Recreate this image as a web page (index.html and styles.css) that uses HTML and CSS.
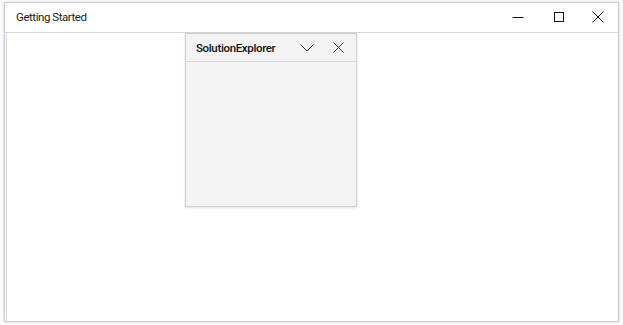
FILE: index.html
```html
<!DOCTYPE html>
<html>
<head>
<meta charset="utf-8">
<link rel="stylesheet" href="styles.css">
</head>
<body>
<div class="window">
  <div class="titlebar">
    <span class="title">Getting Started</span>
    <div class="controls">
      <span class="ctl ctl-min"><svg width="12" height="12" viewBox="0 0 12 12"><path d="M0.5 6.5H11.5" stroke="#111" stroke-width="1"/></svg></span>
      <span class="ctl ctl-max"><svg width="12" height="12" viewBox="0 0 12 12"><rect x="1.5" y="1.5" width="9" height="9" fill="none" stroke="#111" stroke-width="1"/></svg></span>
      <span class="ctl"><svg width="12" height="12" viewBox="0 0 12 12"><path d="M0.5 0.5L11.5 11.5M11.5 0.5L0.5 11.5" stroke="#111" stroke-width="1"/></svg></span>
    </div>
  </div>
  <div class="content">
    <div class="panel">
      <div class="panel-head">
        <span class="panel-title">SolutionExplorer</span>
        <span class="pbtn chev"><svg width="14" height="8" viewBox="0 0 14 8"><path d="M0.5 0.5L7 7L13.5 0.5" fill="none" stroke="#333" stroke-width="1"/></svg></span>
        <span class="pbtn"><svg width="11" height="11" viewBox="0 0 11 11"><path d="M0.5 0.5L10.5 10.5M10.5 0.5L0.5 10.5" fill="none" stroke="#333" stroke-width="1"/></svg></span>
      </div>
      <div class="panel-body"></div>
    </div>
  </div>
</div>
</body>
</html>
```
FILE: styles.css
```css
html, body {
  margin: 0;
  padding: 0;
  background: #ffffff;
}
body {
  width: 623px;
  height: 325px;
  padding: 2px 4px 3px 4px;
  box-sizing: border-box;
  font-family: "Roboto", "Noto Sans", sans-serif;
}
.window {
  height: 100%;
  box-sizing: border-box;
  border: 1px solid #c9ccd8;
  box-shadow: 0 0 3px rgba(150,160,190,0.5);
  display: flex;
  flex-direction: column;
  background: #fff;
}
.titlebar {
  height: 29px;
  display: flex;
  align-items: center;
  justify-content: space-between;
  border-bottom: 1px solid #d6d6d6;
  flex: none;
}
.title {
  font-size: 11.5px;
  color: #1a1a1a;
  margin-left: 11px;
  margin-top: -2px;
  letter-spacing: -0.45px;
}
.controls {
  display: flex;
  margin-right: 14px;
  margin-top: -1px;
}
.ctl {
  width: 12px;
  height: 12px;
  display: block;
}
.ctl-min { margin-right: 29px; }
.ctl-max { margin-right: 27px; }
.ctl svg { display: block; }
.content {
  flex: 1;
  border-left: 1px solid #d8d8d8;
  margin-left: 1px;
  position: relative;
}
.panel {
  position: absolute;
  left: 178px;
  top: 0px;
  width: 170px;
  height: 172px;
  background: #f3f3f3;
  border: 1px solid #cfcfcf;
  box-shadow: 0 1px 2px rgba(0,0,0,0.12);
  display: flex;
  flex-direction: column;
}
.panel-head {
  height: 27px;
  display: flex;
  align-items: center;
  border-bottom: 1px solid #d9d9d9;
  flex: none;
}
.panel-title {
  font-weight: 500;
  font-size: 11.5px;
  color: #111;
  margin-left: 10px;
  flex: 1;
  letter-spacing: -0.35px;
}
.pbtn {
  display: block;
  margin-right: 12px;
}
.pbtn svg { display: block; }
.chev { margin-right: 19px; margin-top: 1px; }
.panel-body { flex: 1; }
```
